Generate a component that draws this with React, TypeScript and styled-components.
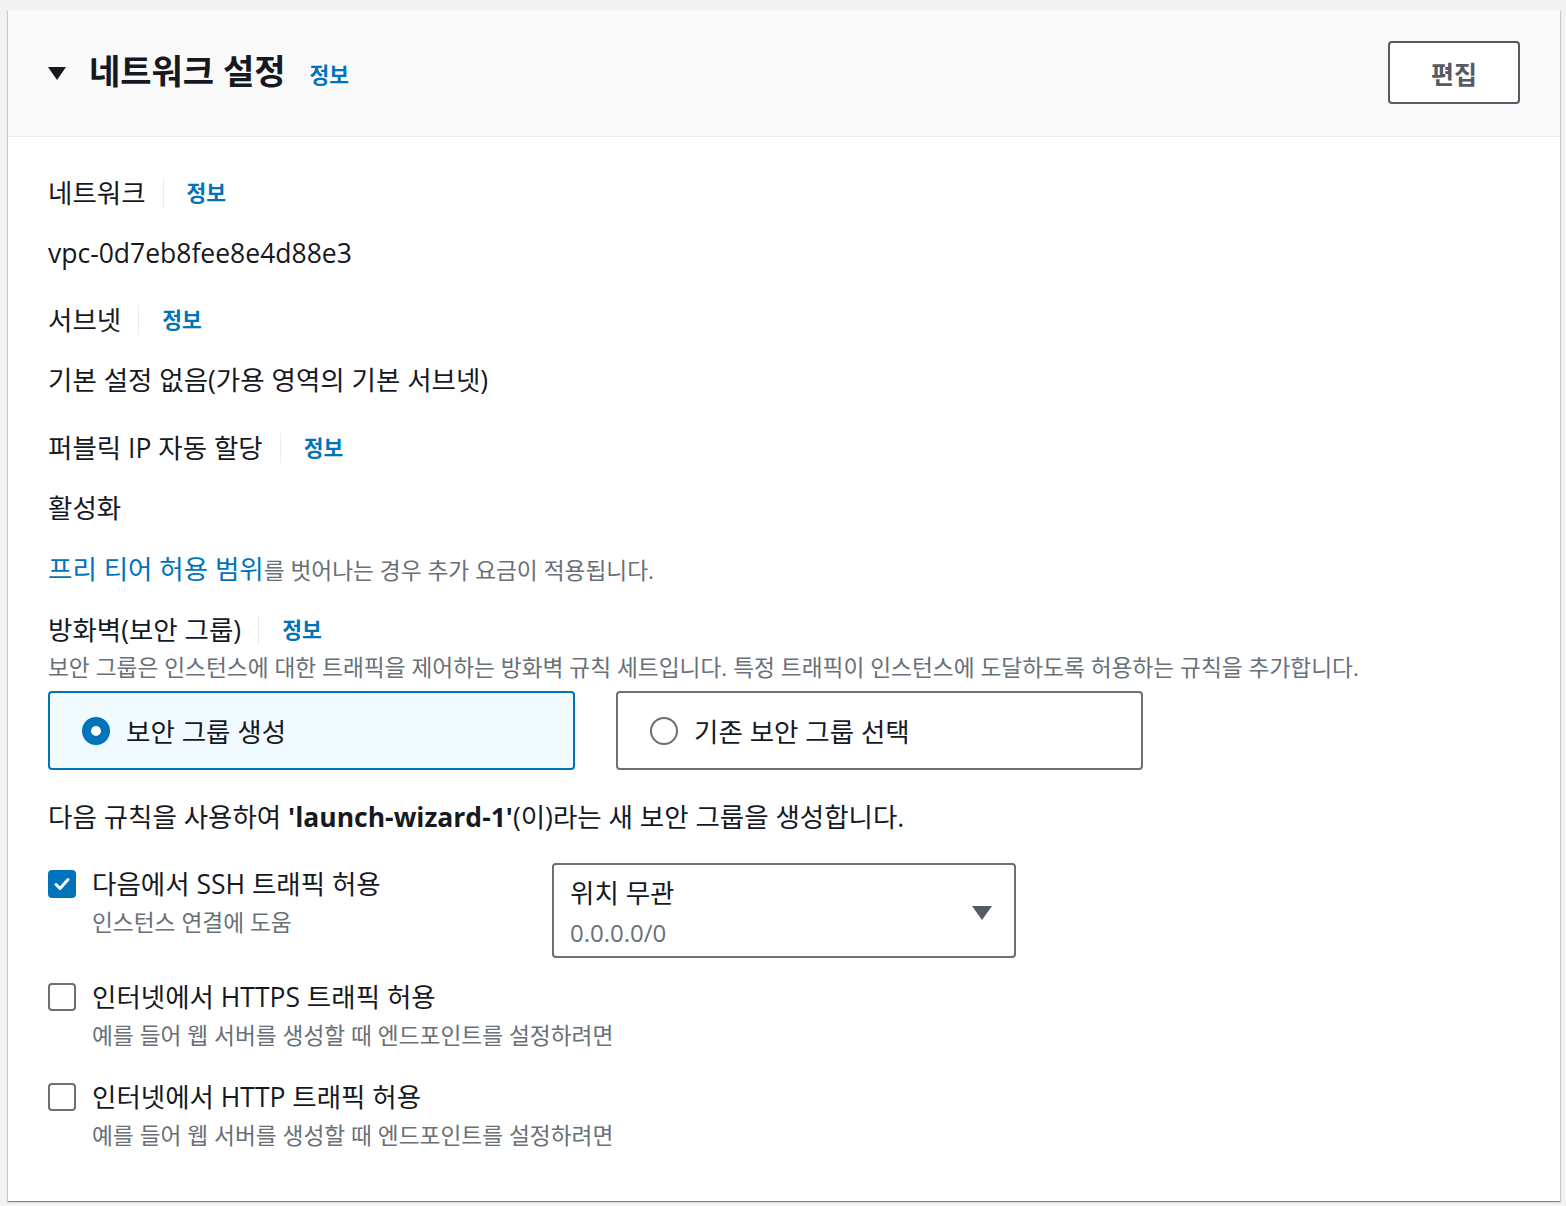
import styled, { createGlobalStyle } from "styled-components";

const GlobalStyle = createGlobalStyle`
  body {
    margin: 0;
    background-color: #f2f3f3;
    font-family: "Open Sans", "Noto Sans CJK KR", sans-serif;
    color: #16191f;
  }
`;

const Page = styled.div`
  padding: 10px 6px 8px 8px;
`;

const Card = styled.section`
  background-color: #ffffff;
  box-shadow: 0 1px 1px 0 rgba(0, 28, 36, 0.3), 1px 1px 1px 0 rgba(0, 28, 36, 0.15),
    -1px 1px 1px 0 rgba(0, 28, 36, 0.15);
`;

const Header = styled.header`
  height: 127px;
  box-sizing: border-box;
  display: flex;
  align-items: center;
  justify-content: space-between;
  padding: 0 40px;
  background-color: #fafafa;
  border-bottom: 1px solid #eaeded;
`;

const HeaderLeft = styled.div`
  display: flex;
  align-items: center;
`;

const Caret = styled.span<{ size: number; color: string }>`
  display: inline-block;
  width: 0;
  height: 0;
  border-left: ${(p) => p.size / 2}px solid transparent;
  border-right: ${(p) => p.size / 2}px solid transparent;
  border-top: ${(p) => p.size * 0.7}px solid ${(p) => p.color};
`;

const Title = styled.h2`
  margin: -4px 0 0 23px;
  font-size: 34px;
  font-weight: 700;
  line-height: 42px;
`;

const Info = styled.a`
  color: #0073bb;
  font-size: 21.5px;
  font-weight: 700;
  text-decoration: none;
  margin-left: 24px;
`;

const EditButton = styled.button`
  width: 132px;
  height: 63px;
  background-color: #ffffff;
  border: 2px solid #545b64;
  border-radius: 4px;
  color: #545b64;
  font-family: inherit;
  font-size: 25px;
  font-weight: 700;
  margin-top: -1px;
`;

const Body = styled.div`
  padding: 39px 40px 43px;
  display: flex;
  flex-direction: column;
`;

const LabelRow = styled.div<{ gapTop?: number }>`
  display: flex;
  align-items: center;
  font-size: 26.5px;
  line-height: 34px;
  margin-top: ${(p) => p.gapTop ?? 0}px;
`;

const Divider = styled.span`
  width: 1px;
  height: 30px;
  background-color: #eaeded;
  margin-left: 17px;
  & + a {
    margin-left: 23px;
  }
`;

const Value = styled.div<{ gapTop?: number }>`
  font-size: 26.5px;
  line-height: 34px;
  margin-top: ${(p) => p.gapTop ?? 26}px;
`;

const Note = styled.div`
  margin-top: 27px;
  font-size: 22.7px;
  line-height: 34px;
  color: #687078;
  a {
    color: #0073bb;
    font-size: 26.5px;
    text-decoration: none;
  }
`;

const Description = styled.div`
  margin-top: 6px;
  font-size: 22.7px;
  line-height: 30px;
  color: #687078;
  white-space: nowrap;
`;

const Tiles = styled.div`
  margin-top: 8px;
  display: grid;
  grid-template-columns: 527px 527px;
  column-gap: 41px;
`;

const Tile = styled.label<{ selected?: boolean }>`
  height: 79px;
  box-sizing: border-box;
  display: flex;
  align-items: center;
  gap: 16px;
  padding-left: 32px;
  border: 2px solid ${(p) => (p.selected ? "#0073bb" : "#687078")};
  border-radius: 4px;
  background-color: ${(p) => (p.selected ? "#f1faff" : "#ffffff")};
  font-size: 26.5px;
`;

const Radio = styled.span<{ checked?: boolean }>`
  width: 28px;
  height: 28px;
  box-sizing: border-box;
  border-radius: 50%;
  border: ${(p) => (p.checked ? "9px solid #0073bb" : "2px solid #687078")};
  background-color: #ffffff;
`;

const RuleText = styled.div`
  margin-top: 30px;
  font-size: 26.5px;
  line-height: 34px;
  b {
    font-weight: 700;
  }
`;

const Rules = styled.div`
  margin-top: 29px;
  display: flex;
  flex-direction: column;
  gap: 22px;
`;

const RuleRow = styled.div`
  display: grid;
  grid-template-columns: 504px 464px;
  align-items: start;
`;

const CheckItem = styled.div<{ offset?: number; bottom?: number }>`
  display: flex;
  align-items: flex-start;
  gap: 16px;
  padding-top: ${(p) => p.offset ?? 0}px;
  padding-bottom: ${(p) => p.bottom ?? 0}px;
  white-space: nowrap;
`;

const Checkbox = styled.span<{ checked?: boolean }>`
  flex: none;
  width: 28px;
  height: 28px;
  box-sizing: border-box;
  margin-top: 3px;
  border-radius: 4px;
  border: 2px solid ${(p) => (p.checked ? "#0073bb" : "#687078")};
  background-color: ${(p) => (p.checked ? "#0073bb" : "#ffffff")};
  display: flex;
  align-items: center;
  justify-content: center;
`;

const CheckText = styled.div`
  display: flex;
  flex-direction: column;
`;

const CheckLabel = styled.span`
  font-size: 26.5px;
  line-height: 34px;
`;

const CheckHint = styled.span`
  margin-top: 7px;
  font-size: 22.7px;
  line-height: 30px;
  color: #687078;
`;

const Select = styled.div`
  height: 95px;
  box-sizing: border-box;
  border: 2px solid #687078;
  border-radius: 4px;
  display: flex;
  align-items: center;
  justify-content: space-between;
  padding: 4px 22px 0 16px;
`;

const SelectText = styled.div`
  display: flex;
  flex-direction: column;
  span:first-child {
    font-size: 26.5px;
    line-height: 40px;
  }
  span:last-child {
    font-size: 24px;
    line-height: 40px;
    color: #687078;
  }
`;

const CheckMark = () => (
  <svg width="18" height="18" viewBox="0 0 18 18">
    <path d="M3 9.5l4 4 8-9" fill="none" stroke="#fff" strokeWidth="3" strokeLinecap="round" strokeLinejoin="round" />
  </svg>
);

const rules = [
  { label: "인터넷에서 HTTPS 트래픽 허용", hint: "예를 들어 웹 서버를 생성할 때 엔드포인트를 설정하려면" },
  { label: "인터넷에서 HTTP 트래픽 허용", hint: "예를 들어 웹 서버를 생성할 때 엔드포인트를 설정하려면" },
];

export default function App() {
  return (
    <>
      <GlobalStyle />
      <Page>
        <Card>
          <Header>
            <HeaderLeft>
              <Caret size={19} color="#16191f" />
              <Title>네트워크 설정</Title>
              <Info>정보</Info>
            </HeaderLeft>
            <EditButton>편집</EditButton>
          </Header>
          <Body>
            <LabelRow>
              네트워크
              <Divider />
              <Info>정보</Info>
            </LabelRow>
            <Value>vpc-0d7eb8fee8e4d88e3</Value>
            <LabelRow gapTop={33}>
              서브넷
              <Divider />
              <Info>정보</Info>
            </LabelRow>
            <Value>기본 설정 없음(가용 영역의 기본 서브넷)</Value>
            <LabelRow gapTop={34}>
              퍼블릭 IP 자동 할당
              <Divider />
              <Info>정보</Info>
            </LabelRow>
            <Value>활성화</Value>
            <Note>
              <a>프리 티어 허용 범위</a>를 벗어나는 경우 추가 요금이 적용됩니다.
            </Note>
            <LabelRow gapTop={25}>
              방화벽(보안 그룹)
              <Divider />
              <Info>정보</Info>
            </LabelRow>
            <Description>
              보안 그룹은 인스턴스에 대한 트래픽을 제어하는 방화벽 규칙 세트입니다. 특정 트래픽이 인스턴스에 도달하도록 허용하는 규칙을 추가합니다.
            </Description>
            <Tiles>
              <Tile selected>
                <Radio checked />
                보안 그룹 생성
              </Tile>
              <Tile>
                <Radio />
                기존 보안 그룹 선택
              </Tile>
            </Tiles>
            <RuleText>
              다음 규칙을 사용하여 <b>'launch-wizard-1'</b>(이)라는 새 보안 그룹을 생성합니다.
            </RuleText>
            <Rules>
              <RuleRow>
                <CheckItem offset={4}>
                  <Checkbox checked>
                    <CheckMark />
                  </Checkbox>
                  <CheckText>
                    <CheckLabel>다음에서 SSH 트래픽 허용</CheckLabel>
                    <CheckHint>인스턴스 연결에 도움</CheckHint>
                  </CheckText>
                </CheckItem>
                <Select>
                  <SelectText>
                    <span>위치 무관</span>
                    <span>0.0.0.0/0</span>
                  </SelectText>
                  <Caret size={21} color="#545b64" />
                </Select>
              </RuleRow>
              {rules.map((r) => (
                <CheckItem key={r.label} bottom={7}>
                  <Checkbox />
                  <CheckText>
                    <CheckLabel>{r.label}</CheckLabel>
                    <CheckHint>{r.hint}</CheckHint>
                  </CheckText>
                </CheckItem>
              ))}
            </Rules>
          </Body>
        </Card>
      </Page>
    </>
  );
}
